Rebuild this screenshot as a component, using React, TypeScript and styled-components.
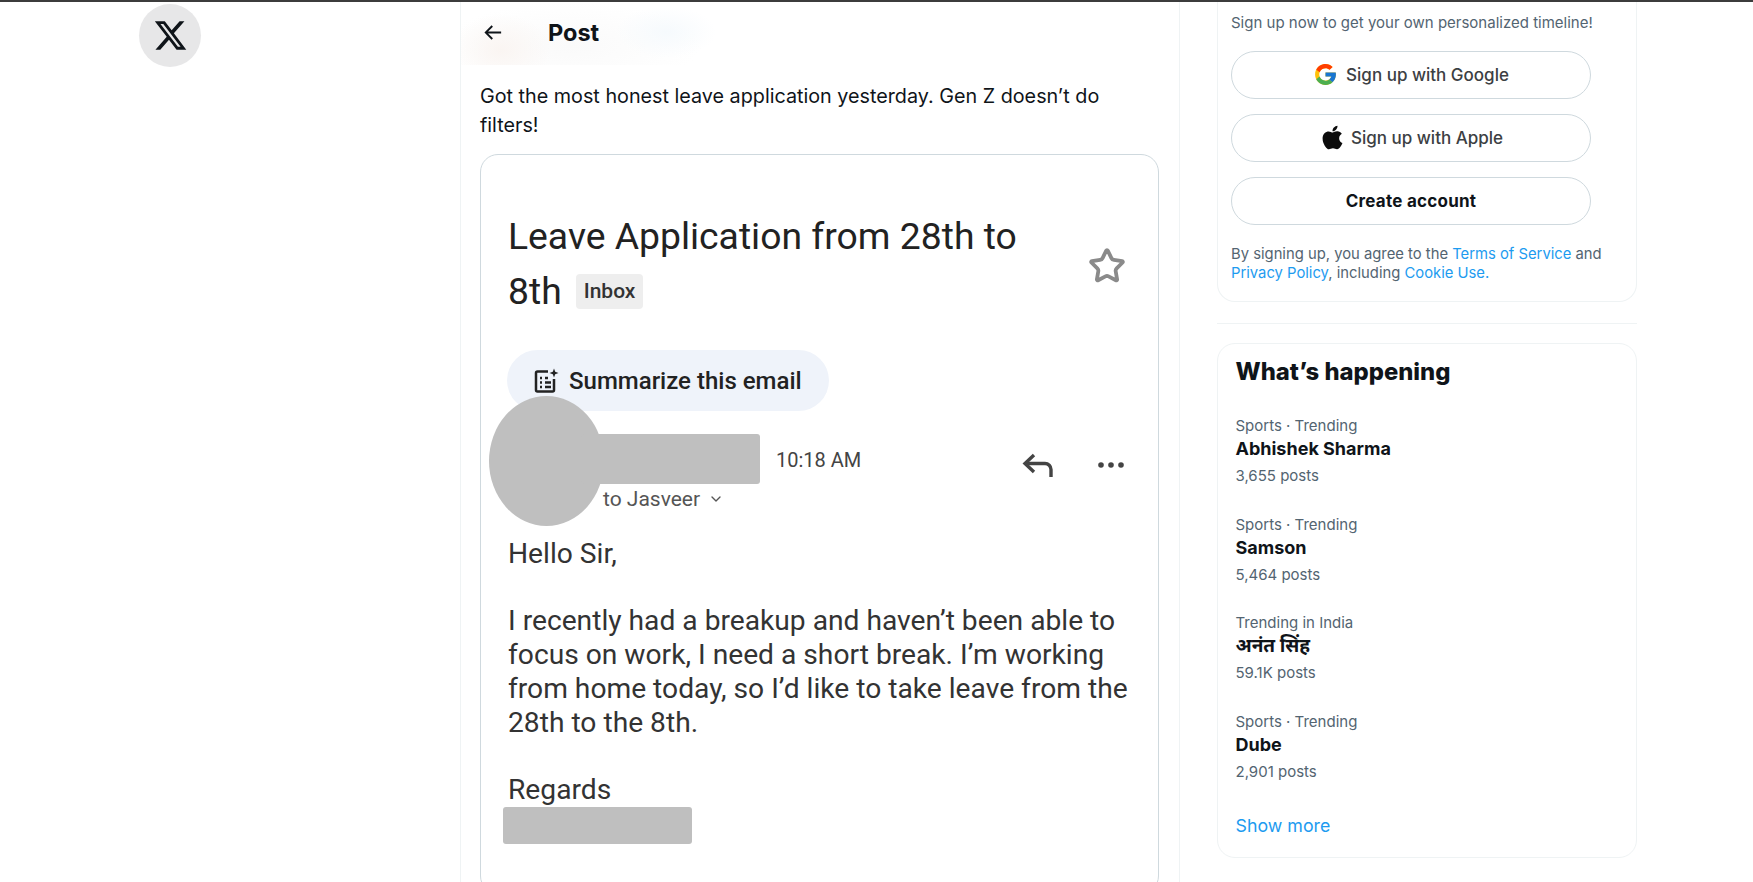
import React from "react";
import styled, { createGlobalStyle } from "styled-components";
import { ChevronDown, Star } from "lucide-react";
import { FaApple } from "react-icons/fa";
import { FcGoogle } from "react-icons/fc";

const GlobalStyle = createGlobalStyle`
  html, body {
    margin: 0;
    height: 100%;
    overflow: hidden;
    background: #fff;
    color: #0f1419;
    font-family: "Inter", "Noto Sans", "Liberation Sans", sans-serif;
  }
`;

const Page = styled.div`
  height: 882px;
  overflow: hidden;
  border-top: 2px solid #3c3c3c;
  box-sizing: border-box;
  display: flex;
`;

const LeftRail = styled.aside`
  width: 460px;
  flex-shrink: 0;
  padding: 2px 0 0 139px;
  box-sizing: border-box;
`;

const LogoButton = styled.div`
  width: 62px;
  height: 63px;
  border-radius: 50%;
  background: #e7e7e8;
  display: flex;
  align-items: center;
  justify-content: center;
`;

const MainColumn = styled.main`
  width: 720px;
  flex-shrink: 0;
  box-sizing: border-box;
  border-left: 1px solid #eff3f4;
  border-right: 1px solid #eff3f4;
`;

const PostHeader = styled.header`
  height: 63px;
  display: flex;
  align-items: center;
  padding: 0 0 2px 20px;
  box-sizing: border-box;
  gap: 44px;
  background:
    radial-gradient(ellipse 50px 36px at 40px 48px, #faf5f2 0%, rgba(255, 255, 255, 0) 100%),
    radial-gradient(ellipse 50px 26px at 205px 30px, #f6fafd 0%, rgba(255, 255, 255, 0) 100%),
    radial-gradient(ellipse 130px 44px at 110px 44px, #fafafa 0%, rgba(255, 255, 255, 0) 100%);
`;

const PostTitle = styled.h1`
  margin: 0;
  font-size: 23.5px;
  line-height: 28px;
  font-weight: 700;
`;

const PostBody = styled.div`
  padding: 0 20px 0 19px;
`;

const TweetText = styled.p`
  margin: 17px 0 14px;
  font-size: 19.75px;
  line-height: 29px;
  font-weight: 400;
`;

const MediaCard = styled.div`
  position: relative;
  height: 740px;
  box-sizing: border-box;
  border: 1px solid #cfd9de;
  border-radius: 18px;
  padding: 54px 26px 0 27px;
  font-family: "Roboto", "Liberation Sans", sans-serif;
  color: #2b2b2b;
`;

const SubjectRow = styled.div`
  display: flex;
  align-items: center;
  justify-content: space-between;
`;

const Subject = styled.h2`
  margin: 0;
  width: 540px;
  font-size: 37.3px;
  line-height: 55px;
  font-weight: 400;
  color: #222;
`;

const SubjectTail = styled.div`
  display: flex;
  align-items: center;
  gap: 14px;
`;

const InboxChip = styled.span`
  padding: 0 8px;
  height: 35px;
  line-height: 35px;
  border-radius: 4px;
  background: #eeeeee;
  font-size: 21px;
  font-weight: 500;
  color: #333;
`;

const StarMark = styled.div`
  display: flex;
  margin: 4px 6px 0 0;
  color: #8a8a8a;
`;

const SummarizePill = styled.div`
  margin: 31px 0 0 -1px;
  display: inline-flex;
  align-items: center;
  gap: 9px;
  height: 61px;
  width: 322px;
  box-sizing: border-box;
  padding-left: 25px;
  border-radius: 31px;
  background: #eff3fa;
  font-size: 24px;
  font-weight: 500;
  color: #222;
`;

const SenderRow = styled.div`
  margin-top: 35px;
  display: flex;
  justify-content: space-between;
`;

const SenderMeta = styled.div`
  padding-left: 95px;
`;

const SentTime = styled.div`
  padding-left: 173px;
  height: 28px;
  line-height: 28px;
  font-size: 20px;
  color: #444;
`;

const Recipient = styled.div`
  margin-top: 11px;
  display: flex;
  align-items: center;
  gap: 8px;
  height: 27px;
  font-size: 21px;
  color: #555;
`;

const SenderActions = styled.div`
  display: flex;
  gap: 42px;
  align-items: center;
  height: 38px;
  padding-right: 7px;
`;

const MailText = styled.p<{ $top: number }>`
  margin: ${(p) => p.$top}px 0 0;
  width: 620px;
  font-size: 28.2px;
  line-height: 34px;
  color: #333;
`;

const RedactedHead = styled.div`
  position: absolute;
  left: 8px;
  top: 241px;
  width: 115px;
  height: 130px;
  border-radius: 50%;
  background: #bfbfbf;
`;

const RedactedBar = styled.div<{ $left: number; $top: number; $w: number; $h: number }>`
  position: absolute;
  left: ${(p) => p.$left}px;
  top: ${(p) => p.$top}px;
  width: ${(p) => p.$w}px;
  height: ${(p) => p.$h}px;
  border-radius: 3px;
  background: #bfbfbf;
`;

const RightColumn = styled.aside`
  width: 420px;
  margin-left: 37px;
  flex-shrink: 0;
`;

const SignupCard = styled.section`
  border: 1px solid #eff3f4;
  border-top: none;
  border-radius: 0 0 18px 18px;
  padding: 11px 14px 22px 13px;
  height: 300px;
  box-sizing: border-box;
`;

const SignupLead = styled.p`
  margin: 0;
  padding-bottom: 2.5px;
  font-size: 15px;
  line-height: 20px;
  color: #536471;
`;

const SignupButton = styled.button<{ $strong?: boolean }>`
  display: flex;
  align-items: center;
  justify-content: center;
  gap: 8px;
  width: 360px;
  height: 48px;
  margin-top: 15px;
  padding: 0;
  background: #fff;
  border: 1px solid #cfd9de;
  border-radius: 24px;
  font-family: inherit;
  font-size: 17px;
  font-weight: ${(p) => (p.$strong ? 700 : 500)};
  letter-spacing: ${(p) => (p.$strong ? "0.25px" : "0")};
  color: ${(p) => (p.$strong ? "#0f1419" : "#3c4043")};
`;

const AppleMark = styled(FaApple)`
  margin-right: -3px;
`;

const Legal = styled.p`
  margin: 20px 0 0;
  width: 380px;
  font-size: 14.8px;
  line-height: 19px;
  color: #536471;
`;

const BlueLink = styled.span`
  color: #1d9bf0;
`;

const Divider = styled.hr`
  margin: 21px 0 0;
  border: none;
  border-top: 1px solid #eff3f4;
`;

const TrendsCard = styled.section`
  margin-top: 19px;
  height: 515px;
  box-sizing: border-box;
  border: 1px solid #eff3f4;
  border-radius: 18px;
  padding: 14px 18px 0 17.5px;
`;

const TrendsTitle = styled.h2`
  margin: 0 0 30px;
  font-size: 23.8px;
  line-height: 28px;
  font-weight: 800;
`;

const TrendItem = styled.div`
  margin-bottom: 28.7px;
`;

const TrendMeta = styled.div`
  font-size: 15px;
  line-height: 20px;
  color: #536471;
`;

const TrendName = styled.div<{ $size: number }>`
  margin-top: 1px;
  font-size: ${(p) => p.$size}px;
  line-height: 24px;
  font-weight: 700;
`;

const TrendPosts = styled(TrendMeta)`
  margin-top: 5px;
`;

const ShowMore = styled.div`
  margin-top: 32px;
  font-size: 17.8px;
  line-height: 24px;
  color: #1d9bf0;
`;

const trends = [
  { meta: "Sports · Trending", name: "Abhishek Sharma", posts: "3,655 posts", size: 18 },
  { meta: "Sports · Trending", name: "Samson", posts: "5,464 posts", size: 18 },
  { meta: "Trending in India", name: "अनंत सिंह", posts: "59.1K posts", size: 19 },
  { meta: "Sports · Trending", name: "Dube", posts: "2,901 posts", size: 18 },
];

const XLogo = () => (
  <svg width="35" height="35" viewBox="0 0 24 24" fill="#0f1419">
    <path d="M18.244 2.25h3.308l-7.227 8.26 8.502 11.24H16.17l-5.214-6.817L4.99 21.75H1.68l7.73-8.835L1.254 2.25H8.08l4.713 6.231zm-1.161 17.52h1.833L7.084 4.126H5.117z" />
  </svg>
);

const BackArrow = () => (
  <svg width="23" height="23" viewBox="0 0 24 24" fill="#0f1419">
    <path d="M7.414 13l5.043 5.04-1.414 1.42L3.586 12l7.457-7.46 1.414 1.42L7.414 11H21v2H7.414z" />
  </svg>
);

const SummarizeIcon = () => (
  <svg width="28" height="28" viewBox="0 0 28 28" fill="none" stroke="#222" strokeWidth="2.5">
    <path d="M16 4.5H5.500a1.500 1.500 0 0 0-1.500 1.500v17a1.500 1.500 0 0 0 1.500 1.500h15a1.500 1.500 0 0 0 1.500-1.500V12" />
    <path d="M8 11h2M8 15.500h2M8 20h2M13 11h3M13 15.500h6M13 20h6" />
    <path d="M22 1.500l1.200 3.300 3.300 1.200-3.300 1.200L22 10.500l-1.200-3.300L17.500 6l3.300-1.200z" fill="#222" stroke="none" />
  </svg>
);

const ReplyIcon = () => (
  <svg width="34" height="28" viewBox="0 0 34 28" fill="none" stroke="#444" strokeWidth="3.4">
    <path d="M13 4L4 12.500L13 21" />
    <path d="M4 12.500H24a6 6 0 0 1 6 6V26" />
  </svg>
);

const MoreIcon = () => (
  <svg width="28" height="8" viewBox="0 0 28 8" fill="#444">
    <circle cx="4" cy="4" r="2.800" />
    <circle cx="14" cy="4" r="2.800" />
    <circle cx="24" cy="4" r="2.800" />
  </svg>
);

export default function App() {
  return (
    <>
      <GlobalStyle />
      <Page>
        <LeftRail>
          <LogoButton>
            <XLogo />
          </LogoButton>
        </LeftRail>

        <MainColumn>
          <PostHeader>
            <BackArrow />
            <PostTitle>Post</PostTitle>
          </PostHeader>
          <PostBody>
            <TweetText>
              Got the most honest leave application yesterday. Gen Z doesn’t do filters!
            </TweetText>
            <MediaCard>
              <SubjectRow>
                <Subject>
                  Leave Application from 28th to
                  <SubjectTail>
                    <span>8th</span>
                    <InboxChip>Inbox</InboxChip>
                  </SubjectTail>
                </Subject>
                <StarMark>
                  <Star size={38} strokeWidth={2.4} strokeLinejoin="miter" />
                </StarMark>
              </SubjectRow>
              <SummarizePill>
                <SummarizeIcon />
                Summarize this email
              </SummarizePill>
              <SenderRow>
                <SenderMeta>
                  <SentTime>10:18 AM</SentTime>
                  <Recipient>
                    to Jasveer
                    <ChevronDown size={16} />
                  </Recipient>
                </SenderMeta>
                <SenderActions>
                  <ReplyIcon />
                  <MoreIcon />
                </SenderActions>
              </SenderRow>
              <MailText $top={25}>Hello Sir,</MailText>
              <MailText $top={33}>
                I recently had a breakup and haven’t been able to focus on work, I need a short break.
                I’m working from home today, so I’d like to take leave from the 28th to the 8th.
              </MailText>
              <MailText $top={33}>Regards</MailText>
              <RedactedHead />
              <RedactedBar $left={100} $top={279} $w={179} $h={50} />
              <RedactedBar $left={22} $top={652} $w={189} $h={37} />
            </MediaCard>
          </PostBody>
        </MainColumn>

        <RightColumn>
          <SignupCard>
            <SignupLead>Sign up now to get your own personalized timeline!</SignupLead>
            <SignupButton>
              <FcGoogle size={25} />
              Sign up with Google
            </SignupButton>
            <SignupButton>
              <AppleMark size={27} color="#0b0b0b" />
              Sign up with Apple
            </SignupButton>
            <SignupButton $strong>Create account</SignupButton>
            <Legal>
              By signing up, you agree to the <BlueLink>Terms of Service</BlueLink> and{" "}
              <BlueLink>Privacy Policy</BlueLink>, including <BlueLink>Cookie Use.</BlueLink>
            </Legal>
          </SignupCard>
          <Divider />
          <TrendsCard>
            <TrendsTitle>What’s happening</TrendsTitle>
            {trends.map((t) => (
              <TrendItem key={t.name}>
                <TrendMeta>{t.meta}</TrendMeta>
                <TrendName $size={t.size}>{t.name}</TrendName>
                <TrendPosts>{t.posts}</TrendPosts>
              </TrendItem>
            ))}
            <ShowMore>Show more</ShowMore>
          </TrendsCard>
        </RightColumn>
      </Page>
    </>
  );
}
